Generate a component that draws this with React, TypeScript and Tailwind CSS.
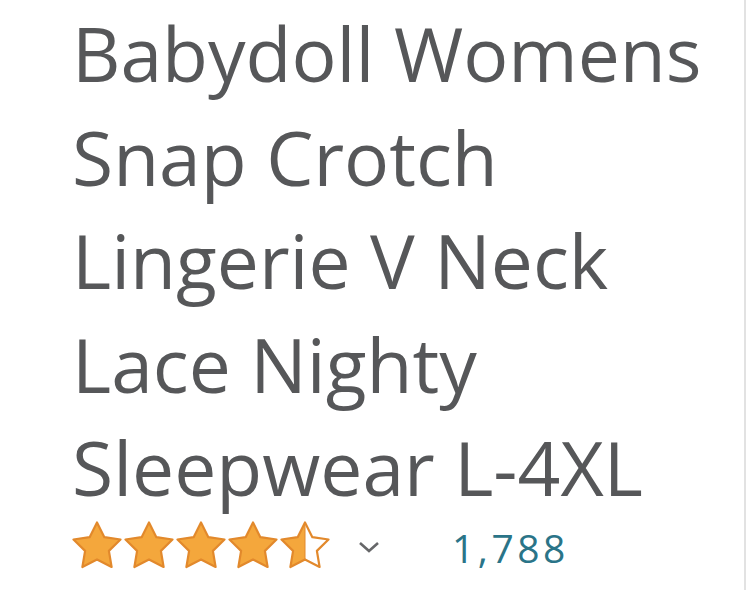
import React from "react";

const STAR =
  "M25 2.5L32.35 17.2L48.5 19.5L36.9 30.9L39.6 47L25 39.4L10.4 47L13.1 30.9L1.5 19.5L17.65 17.2Z";

function Star({ half = false, id }: { half?: boolean; id: string }) {
  return (
    <svg viewBox="0 0 50 50" className="w-[50px] h-[50px]">
      <defs>
        <linearGradient id={id} x1="0" x2="50" y1="0" y2="0" gradientUnits="userSpaceOnUse">
          <stop offset={half ? "0.5" : "1"} stopColor="#f4a73c" />
          <stop offset={half ? "0.5" : "1"} stopColor="#ffffff" />
        </linearGradient>
      </defs>
      <path d={STAR} fill={`url(#${id})`} stroke="#e2892c" strokeWidth="2.2" strokeLinejoin="round" />
      {half && <line x1="25" y1="3" x2="25" y2="39" stroke="#e2892c" strokeWidth="1" />}
    </svg>
  );
}

export default function App() {
  return (
    <div className="w-[749px] h-[590px] bg-white flex overflow-hidden">
      <div className="flex-1 pl-[72px] pt-[2px] font-['Open_Sans',sans-serif]">
        <h1 className="text-[75px] leading-[103.5px] text-[#565759] font-normal whitespace-nowrap">
          Babydoll Womens
          <br />
          Snap Crotch
          <br />
          Lingerie V Neck
          <br />
          Lace Nighty
          <br />
          Sleepwear L-4XL
        </h1>
        <div className="flex items-center">
          <div className="flex gap-[2px]">
            <Star id="s1" />
            <Star id="s2" />
            <Star id="s3" />
            <Star id="s4" />
            <Star id="s5" half />
          </div>
          <svg viewBox="0 0 22 12" className="w-[22px] h-[12px] ml-[28px] mt-[4px]">
            <path d="M2 2l9 8 9-8" fill="none" stroke="#666769" strokeWidth="2.6" />
          </svg>
          <span className="ml-[72px] text-[39px] leading-none tracking-[3.5px] text-[#2a7488] mt-[6px]">
            1,788
          </span>
        </div>
      </div>
      <div className="w-[2px] h-full bg-[#e2e2e2] mr-[3px]" />
    </div>
  );
}
